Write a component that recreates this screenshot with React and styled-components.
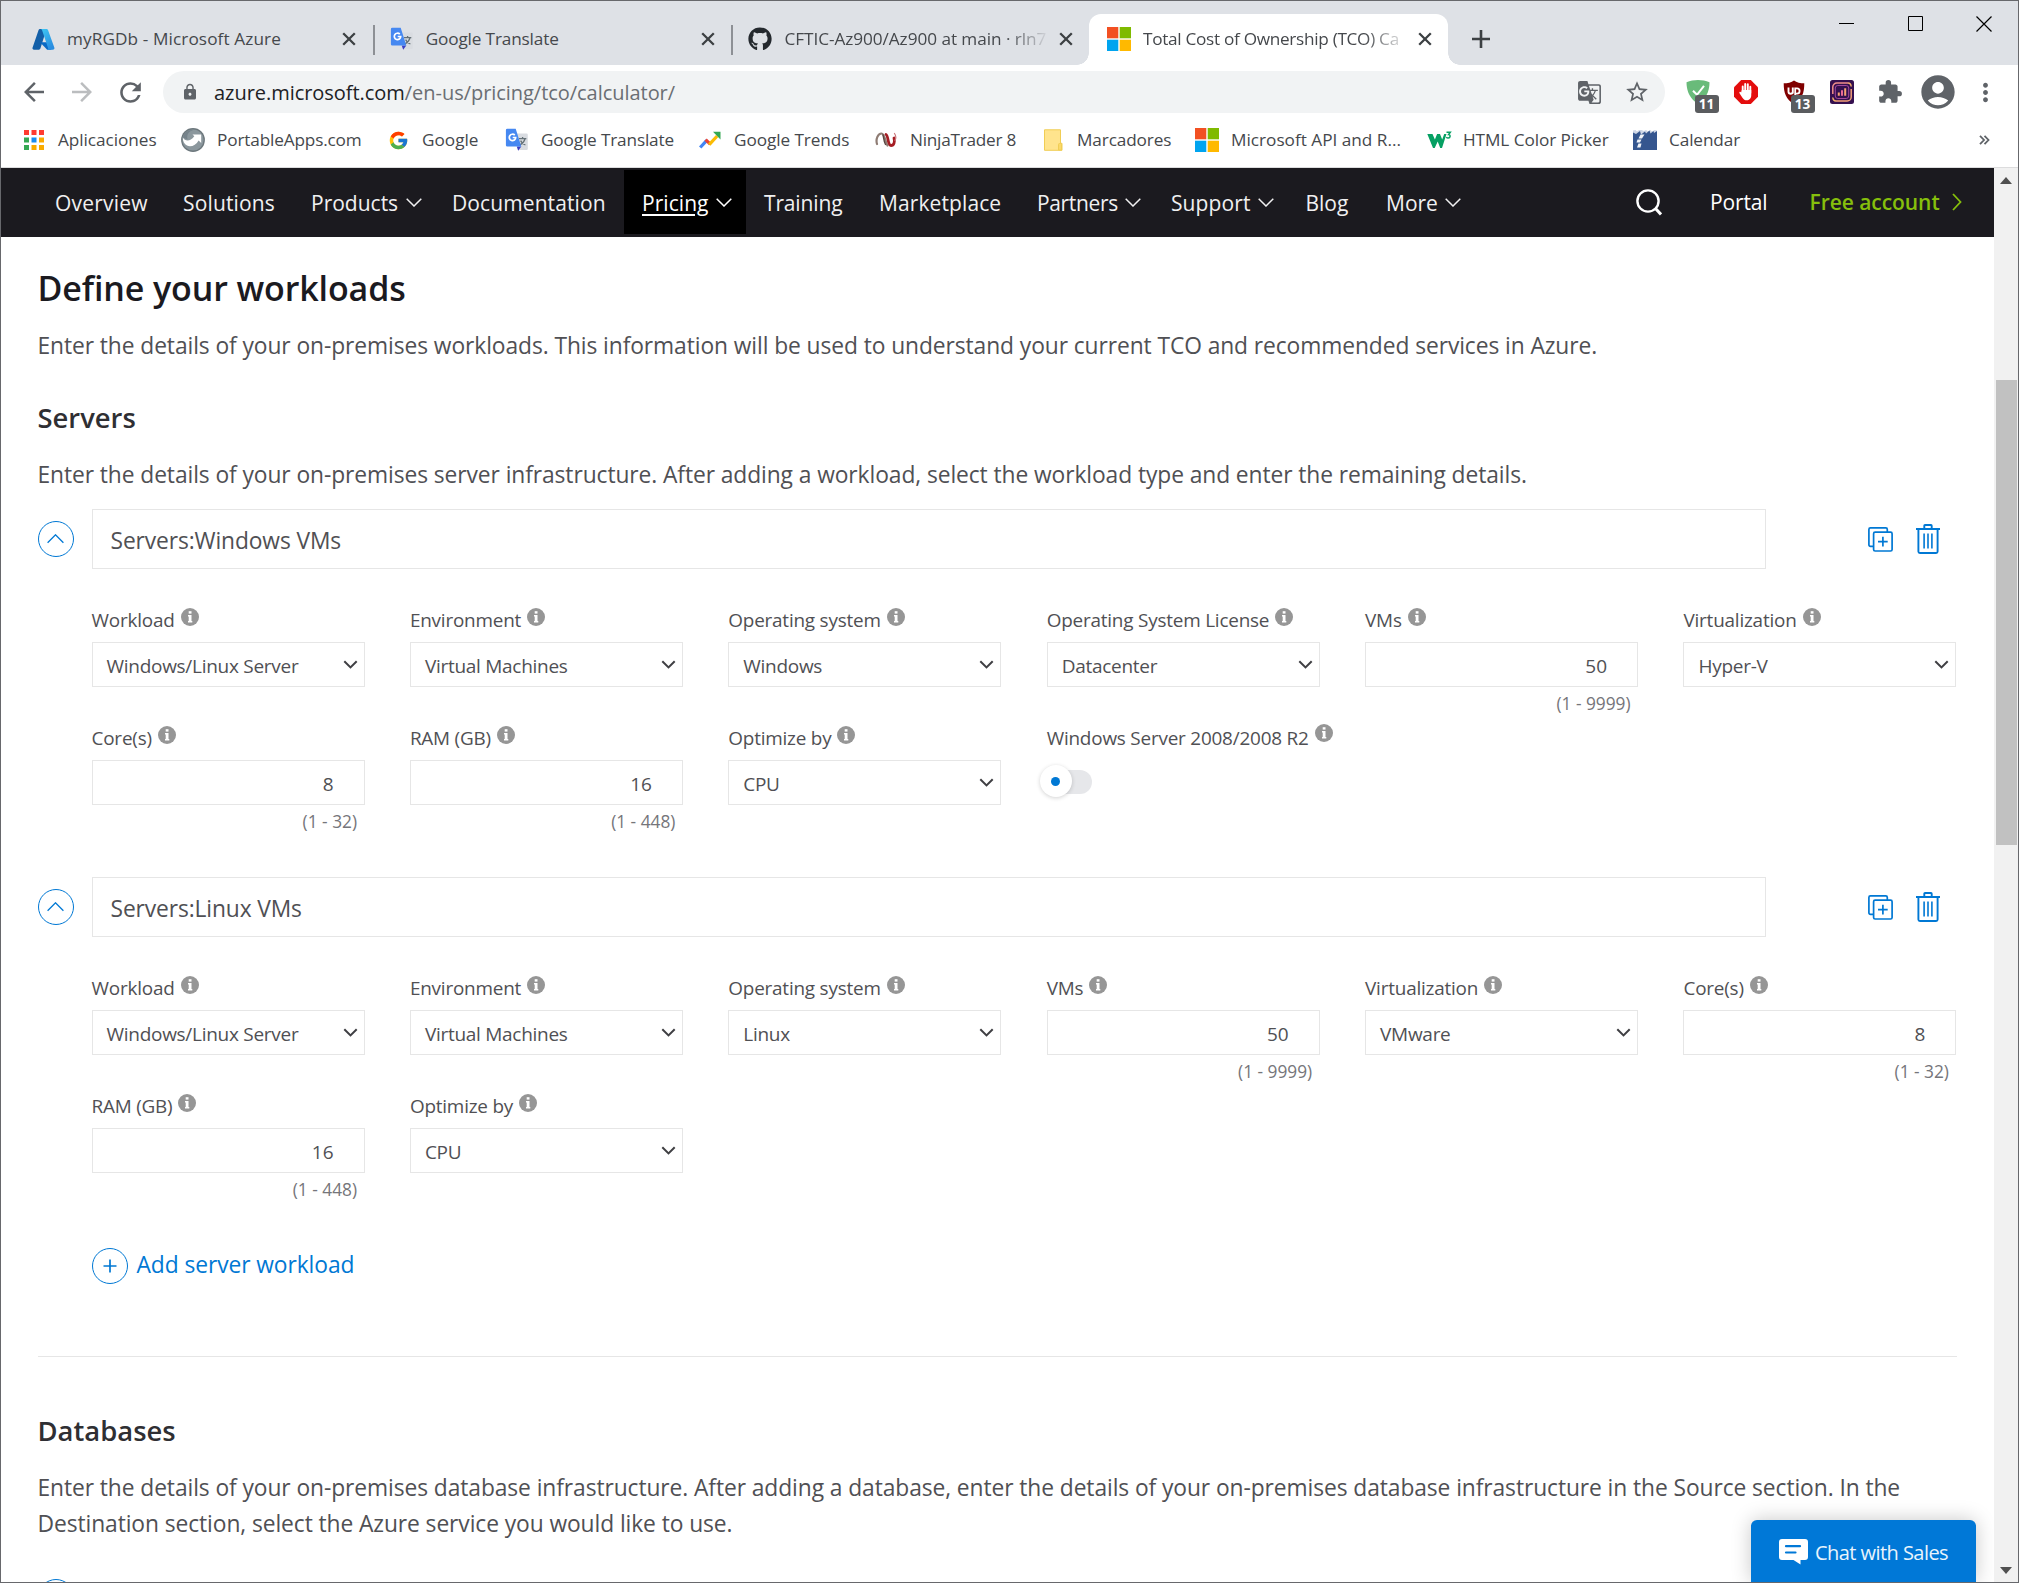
import React from "react";
import styled, { createGlobalStyle, css } from "styled-components";
import {
  MdArrowBack,
  MdArrowForward,
  MdRefresh,
  MdLock,
  MdStarBorder,
  MdExtension,
  MdAccountCircle,
  MdMoreVert,
  MdGTranslate,
} from "react-icons/md";
import { FaGithub } from "react-icons/fa";
import { FcGoogle } from "react-icons/fc";

const blue = "#0078d4";

const GlobalStyle = createGlobalStyle`
  *, *::before, *::after { box-sizing: border-box; }
  body {
    margin: 0;
    font-family: "Open Sans", "Noto Sans", sans-serif;
    background: #fff;
  }
  h1, h2, p { margin: 0; }
  svg { display: block; flex: none; }
`;

/* ---------- window ---------- */

const Window = styled.div`
  display: flex;
  flex-direction: column;
  width: 2019px;
  height: 1583px;
  overflow: hidden;
  border: 1px solid #67686c;
  background: #fff;
`;

const TabStrip = styled.div`
  display: flex;
  flex: none;
  height: 64px;
  padding-left: 12px;
  background: #dee1e6;
`;

const Tab = styled.div`
  position: relative;
  display: flex;
  align-items: center;
  width: 358.7px;
  height: 51px;
  margin-top: 13px;
  padding: 0 0 1px 18px;
  color: #45484c;
  ${(p) =>
    p.$divided &&
    css`
      &::before {
        content: "";
        position: absolute;
        left: 1px;
        top: 11px;
        width: 2px;
        height: 30px;
        background: #8d9095;
      }
    `}
  ${(p) =>
    p.$active &&
    css`
      background: #fff;
      border-radius: 12px 12px 0 0;
      &::before,
      &::after {
        content: "";
        position: absolute;
        bottom: 0;
        width: 12px;
        height: 12px;
      }
      &::before {
        left: -12px;
        background: radial-gradient(circle at 0 0, transparent 11.5px, #fff 12px);
      }
      &::after {
        right: -12px;
        background: radial-gradient(circle at 100% 0, transparent 11.5px, #fff 12px);
      }
    `}
`;

const IconSlot = styled.span`
  display: flex;
  flex: none;
  align-items: center;
  justify-content: center;
  width: 24px;
  height: 24px;
  margin-right: 12px;
`;

const TabTitle = styled.span`
  width: 263px;
  padding-bottom: 1px;
  overflow: hidden;
  white-space: nowrap;
  font-size: 17.2px;
  line-height: 26px;
  letter-spacing: ${(p) => p.$track || 0}px;
  ${(p) =>
    p.$fade &&
    css`
      mask-image: linear-gradient(to right, #000 222px, transparent 266px);
    `}
`;

const TabClose = styled.span`
  margin-left: 11px;
`;

const NewTab = styled.span`
  display: flex;
  align-items: center;
  height: 50px;
  margin: 13px 0 0 24.5px;
`;

const WindowControls = styled.div`
  display: flex;
  margin-left: auto;
`;

const WindowControl = styled.span`
  display: flex;
  align-items: center;
  justify-content: center;
  width: 68.5px;
  height: 45px;
`;

const Toolbar = styled.div`
  display: flex;
  flex: none;
  align-items: center;
  height: 54px;
  padding-left: 9px;
  color: #5f6368;
`;

const ToolButton = styled.span`
  position: relative;
  display: flex;
  flex: none;
  align-items: center;
  justify-content: center;
  width: 48px;
  height: 42px;
  color: ${(p) => (p.$disabled ? "#bbbdbf" : "#5f6368")};
`;

const Omnibox = styled.div`
  display: flex;
  align-items: center;
  width: 1502px;
  height: 42px;
  margin: 0 8.5px 0 9px;
  padding: 0 4px 0 18px;
  border-radius: 21px;
  background: #f1f3f4;
`;

const Url = styled.span`
  flex: 1;
  margin-left: 15px;
  padding-top: 2px;
  font-size: 20px;
  line-height: 30px;
  letter-spacing: -0.04px;
  color: #6a6e73;
  white-space: nowrap;
`;

const Host = styled.span`
  color: #202124;
`;

const Badge = styled.span`
  position: absolute;
  left: 21px;
  top: 24px;
  width: 24px;
  height: 18px;
  border-radius: 3px;
  background: #5a5c5f;
  color: #fff;
  font-size: 13.5px;
  font-weight: 700;
  line-height: 19px;
  text-align: center;
`;

const BookmarkBar = styled.div`
  display: flex;
  flex: none;
  height: 49px;
  padding: 0 0 6px 21px;
  border-bottom: 1px solid #dcdcdd;
`;

const Bookmark = styled.span`
  display: flex;
  flex: none;
  align-items: center;
  width: ${(p) => p.$width}px;
  color: #45484c;
  font-size: 17.2px;
  letter-spacing: ${(p) => p.$track || 0}px;
  white-space: nowrap;
`;

const BookmarkText = styled.span`
  padding-bottom: 2px;
`;

const BookmarkOverflow = styled.span`
  display: flex;
  align-items: center;
  margin: 0 28px 0 auto;
`;

/* ---------- page ---------- */

const Viewport = styled.div`
  display: flex;
  flex: 1;
  min-height: 0;
`;

const Page = styled.div`
  position: relative;
  flex: 1;
  overflow: hidden;
`;

const SiteNav = styled.nav`
  display: flex;
  height: 69px;
  padding: 2px 0 3px 36px;
  background: #1b1a1f;
`;

const NavItem = styled.a`
  display: flex;
  align-items: center;
  width: ${(p) => p.$width}px;
  padding: 1px 0 0 18px;
  color: #f0f0f1;
  font-size: 21px;
  font-weight: 500;
  line-height: 30px;
  letter-spacing: ${(p) => p.$track || 0}px;
  white-space: nowrap;
  ${(p) =>
    p.$current &&
    css`
      background: #000;
      color: #fff;
      & > span {
        text-decoration: underline;
        text-decoration-thickness: 2px;
        text-underline-offset: 3px;
      }
    `}
  svg {
    margin: 0 0 0 7.5px;
  }
`;

const NavTools = styled.div`
  display: flex;
  align-items: center;
  margin-left: auto;
  padding-right: 32px;
  color: #fff;
  font-size: 21px;
  font-weight: 500;
`;

const PortalLink = styled.a`
  width: 99.5px;
  margin-left: 48px;
  letter-spacing: -0.15px;
`;

const FreeLink = styled.a`
  display: flex;
  align-items: center;
  justify-content: space-between;
  width: 152.5px;
  color: #86bf0c;
  font-weight: 600;
  letter-spacing: -0.05px;
  white-space: nowrap;
`;

const Main = styled.main`
  padding: 27px 37px 0 36.5px;
`;

const PageTitle = styled.h1`
  font-size: 34px;
  font-weight: 600;
  line-height: 48px;
  letter-spacing: -0.12px;
  color: #1b1a1f;
`;

const SectionTitle = styled.h2`
  margin-top: ${(p) => p.$gap}px;
  font-size: 27.4px;
  font-weight: 600;
  line-height: 36px;
  color: #2f2f33;
`;

const Lead = styled.p`
  margin-top: ${(p) => p.$gap}px;
  font-size: 22.8px;
  line-height: 36px;
  letter-spacing: -0.085px;
  color: #505054;
  white-space: nowrap;
`;

const Workload = styled.section`
  margin: ${(p) => p.$top || 0}px 0 36px;
`;

const WorkloadHeader = styled.div`
  display: flex;
  align-items: center;
  height: 60px;
`;

const RoundButton = styled.span`
  display: flex;
  flex: none;
  align-items: center;
  justify-content: center;
  width: 36px;
  height: 36px;
  border: 1.5px solid ${blue};
  border-radius: 50%;
`;

const NameField = styled.div`
  display: flex;
  align-items: center;
  width: 1674px;
  height: 60px;
  margin-left: 18px;
  padding: 2px 18px 0;
  border: 1px solid #e6e6e6;
  color: #505054;
  font-size: 22.8px;
  letter-spacing: -0.12px;
`;

const HeaderActions = styled.div`
  display: flex;
  align-items: center;
  gap: 23px;
  margin: 0 17px 0 auto;
`;

const FieldGrid = styled.div`
  display: grid;
  grid-template-columns: repeat(6, 273px);
  grid-auto-rows: 118px;
  column-gap: 45.4px;
  margin: 36px 0 0 54px;
`;

const Field = styled.div`
  min-width: 0;
`;

const Label = styled.div`
  display: flex;
  height: 28px;
  margin-bottom: 9px;
  font-size: 18.9px;
  line-height: 30px;
  letter-spacing: -0.2px;
  color: #505054;
  white-space: nowrap;
  svg {
    margin: ${(p) => (p.$raised ? 1 : 3)}px 0 0 6px;
  }
`;

const Control = styled.div`
  display: flex;
  align-items: center;
  justify-content: ${(p) => (p.$numeric ? "flex-end" : "space-between")};
  height: 45px;
  padding: ${(p) => (p.$numeric ? "3px 30px 0 0" : "3px 6px 0 14px")};
  border: 1px solid #e6e6e6;
  color: #505054;
  font-size: 19px;
  line-height: 28px;
  letter-spacing: ${(p) => (p.$numeric ? 0 : -0.28)}px;
  svg {
    margin-top: -4px;
  }
`;

const Hint = styled.div`
  margin: 5px 7.5px 0 0;
  color: #75757a;
  font-size: 17.3px;
  line-height: 24px;
  text-align: right;
`;

const Switch = styled.div`
  display: flex;
  align-items: center;
  width: 47px;
  height: 24px;
  margin: 19px 0 0 -2px;
  border-radius: 12px;
  background: #e6e7ea;
`;

const Knob = styled.span`
  display: flex;
  flex: none;
  align-items: center;
  justify-content: center;
  width: 32px;
  height: 32px;
  margin: -2px 0 0 -5px;
  border-radius: 50%;
  background: #fff;
  box-shadow: 0 1px 4px rgba(0, 0, 0, 0.18);
  &::after {
    content: "";
    width: 9px;
    height: 9px;
    border-radius: 50%;
    background: ${blue};
  }
`;

const AddWorkload = styled.a`
  display: flex;
  align-items: center;
  gap: 9px;
  height: 36px;
  margin: 39px 0 72px 54px;
  color: ${blue};
  font-size: 22.8px;
  line-height: 34px;
  letter-spacing: -0.08px;
`;

const AddText = styled.span`
  padding-bottom: 2px;
`;

const Divider = styled.div`
  height: 1px;
  background: #e6e6e6;
`;

const NextWorkload = styled.div`
  margin-top: 37px;
`;

const ChatButton = styled.div`
  position: absolute;
  right: 18px;
  bottom: 0;
  display: flex;
  align-items: flex-start;
  width: 225px;
  height: 62px;
  padding: 19px 0 0 28px;
  border-radius: 6px 6px 0 0;
  background: #0078d7;
  box-shadow: 0 0 20px rgba(0, 0, 0, 0.22);
  color: #e9f4fc;
  font-size: 20px;
  line-height: 28px;
  letter-spacing: -0.55px;
  white-space: nowrap;
  svg {
    margin-right: 7px;
  }
`;

const ScrollTrack = styled.div`
  display: flex;
  flex-direction: column;
  align-items: center;
  width: 24px;
  padding: 9px 0 8px;
  background: #f1f1f1;
`;

const ScrollThumb = styled.div`
  width: 21px;
  height: 465px;
  margin: 196px 0 auto;
  background: #c1c1c1;
`;

/* ---------- icons ---------- */

const Cross = () => (
  <svg width="16" height="16" viewBox="0 0 16 16" stroke="#3c4043" strokeWidth="2.3">
    <path d="M2.2 2.2 13.8 13.8M13.8 2.2 2.2 13.8" />
  </svg>
);

const AzureLogo = () => (
  <svg width="23" height="23" viewBox="0 0 23 23">
    <defs>
      <linearGradient id="az" x1="0" y1="0" x2="0.6" y2="1">
        <stop offset="0" stopColor="#3fc8f4" />
        <stop offset="1" stopColor="#2a8de0" />
      </linearGradient>
    </defs>
    <path d="M8 1h6.5L8.4 20.6a1.6 1.6 0 0 1-1.5 1.1H2A1.5 1.5 0 0 1 .6 19.6L6.6 2A1.5 1.5 0 0 1 8 1z" fill="#135fa8" />
    <path d="M8 14.2h9.5l2 7.5h-4.3z" fill="#0a69c4" />
    <path d="M8.6 1h6a1.5 1.5 0 0 1 1.4 1l6.3 17.6a1.5 1.5 0 0 1-1.4 2.1h-6.3a1.5 1.5 0 0 0 1.3-2.1L10 2a1.5 1.5 0 0 0-1.4-1z" fill="url(#az)" />
  </svg>
);

const TranslateLogo = () => (
  <svg width="24" height="24" viewBox="0 0 24 24">
    <path d="M9 5.5h12.5a1.3 1.3 0 0 1 1.3 1.3v14a1.3 1.3 0 0 1-1.3 1.3H13.6z" fill="#d9dce1" />
    <path d="M14 10.6h7.3M17.6 9v1.6M20 10.8c-.7 2.6-2.8 4.9-5 6.1M15.6 12.6c1 2 2.8 3.7 4.8 4.4" stroke="#657177" strokeWidth="1.3" fill="none" />
    <path d="M11.7 18.4h4.6l-3.1 4.4z" fill="#3a3fc4" />
    <path d="M2.3.8h8.4l5.6 17.8H2.3A1.4 1.4 0 0 1 .9 17.2V2.2A1.4 1.4 0 0 1 2.3.8z" fill="#4688f1" />
    <path d="M9.800 7.200a3.200 3.200 0 1 0 .9 2.300H7.700" stroke="#fff" strokeWidth="1.700" fill="none" />
  </svg>
);

const MicrosoftLogo = () => (
  <svg width="24" height="24" viewBox="0 0 24 24">
    <path d="M0 0h11.3v11.3H0z" fill="#f25022" />
    <path d="M12.7 0H24v11.3H12.7z" fill="#7fba00" />
    <path d="M0 12.7h11.3V24H0z" fill="#00a4ef" />
    <path d="M12.7 12.7H24V24H12.7z" fill="#ffb900" />
  </svg>
);

const AppsIcon = () => {
  const colors = ["#ff3b30", "#ff3b30", "#ff3b30", "#34a853", "#1a8cf0", "#f9ab00", "#34a853", "#f9ab00", "#f9ab00"];
  return (
    <svg width="20" height="20" viewBox="0 0 20 20">
      {colors.map((c, i) => (
        <rect key={i} x={(i % 3) * 7.5} y={Math.floor(i / 3) * 7.5} width="5" height="5" fill={c} />
      ))}
    </svg>
  );
};

const PortableAppsIcon = () => (
  <svg width="24" height="24" viewBox="0 0 24 24">
    <circle cx="12" cy="12" r="11.9" fill="#6c777c" />
    <circle cx="12" cy="12" r="10.6" fill="#8b979d" />
    <path d="M11.500 6.500h8.700v8.500l-2.600-2.600c-2.600 4.600-7.400 7-11.600 5.200C3.400 16.300 1.700 13.500 1.800 9.500c2.200 3.600 7 4.600 11.500-1.200z" fill="#fff" />
    <path d="M2 9.500C3 4.500 8 1.500 12 2.200 7.500 3.500 5.500 6.500 6.500 11.500z" fill="#75828a" />
  </svg>
);

const TrendsIcon = () => (
  <svg width="22" height="18" viewBox="0 0 22 18" fill="none" strokeWidth="3.2">
    <path d="M1.200 16.500 7.800 9.300" stroke="#4285f4" />
    <path d="M6.600 8.600 11.200 13.200" stroke="#ea4335" />
    <path d="M10.200 13.600 18.200 5" stroke="#fbbc04" />
    <path d="M14 .8h7.500v7.800z" fill="#34a853" />
  </svg>
);

const NinjaIcon = () => (
  <svg width="22" height="16" viewBox="0 0 22 16" fill="none" strokeLinecap="round">
    <path d="M2 12C.500 7 3 1.500 6.500 1.500c3.500 0 3.500 9 6 12" stroke="#8e7c74" strokeWidth="2.200" />
    <path d="M8 3c1 3 .500 6 2.500 9.500" stroke="#5a4540" strokeWidth="1.400" />
    <path d="M11 2.500c2.500 1 1.500 11 5 11 3 0 4-3.500 3-7.500" stroke="#a51d24" strokeWidth="2.800" />
    <path d="M19.500 1.500c1.500 2 1.500 5 .500 7" stroke="#c9757a" strokeWidth="1.200" />
  </svg>
);

const FolderIcon = () => (
  <svg width="19" height="22" viewBox="0 0 19 22" fill="#ffe48d" stroke="#f0cd55">
    <path d="M.5.8h16v13.500h1.5v7H.5z" />
    <path d="M14.500 21v-5.500a1 1 0 0 1 1-1h1a1 1 0 0 1 1 1V21z" fill="#fbd968" />
  </svg>
);

const W3Icon = () => (
  <svg width="25" height="18" viewBox="0 0 25 18">
    <path d="M.3 3h5.200L7.900 8.500 10.100 3h2.900L15.200 8.500 17.200 3h2.300L15 17h-1.800L10.700 10.500l-3 6.500H6z" fill="#06a063" />
    <path d="M19.500 1.200h3.800L21.600 3.500c2.100.1 2 3.600-.4 3.600-.9 0-1.500-.3-1.900-.9" fill="none" stroke="#06a063" strokeWidth="1.500" />
  </svg>
);

const CalendarIcon = () => (
  <svg width="24" height="20" viewBox="0 0 24 20">
    <path d="M0 .5 2.500 0 4 1.500 6 0h2.500L11 1l2-1 2 1.500L17.500 0 19 1.500 21.500 0 24 .5V20H0z" fill="#cfd7e6" />
    <path d="M0 2.500 3 4l4-3 1 3.500 4-3 1 2 3.500-3 1 3L20.500 1l.500 2 3-2V20H0z" fill="#35568f" />
    <path d="M7.500 4.500h4L9 8.500H5.500zM4.500 9.500h4l-1.500 3H3.500zM5.500 13.500h3l-1 4H4z" fill="#f0f3f8" />
  </svg>
);

const GreenShield = () => (
  <svg width="24" height="24" viewBox="0 0 24 24">
    <path d="M12 0c3.800 0 8 .8 11.500 2.200C23.500 12 19.500 19 12 24 4.500 19 .5 12 .5 2.200 4 .8 8.200 0 12 0z" fill="#69bb7a" />
    <path d="m7 10.800 4 4 7-9" fill="none" stroke="#fff" strokeWidth="2" />
  </svg>
);

const StopHand = () => (
  <svg width="24" height="24" viewBox="0 0 24 24">
    <path d="M7.200 0h9.600L24 7.200v9.600L16.800 24H7.200L0 16.800V7.200z" fill="#e40d0d" />
    <path d="M8.700 13V6.400M11.200 11V4M13.800 11V4.300M16.300 13V6.800" stroke="#fff" strokeWidth="1.900" strokeLinecap="round" />
    <path d="M7.800 10h9.450v5.300c0 5.900-6.700 6.300-8.800 2.400L5.500 13.300c-.7-1.300.9-2 1.700-.9z" fill="#fff" />
  </svg>
);

const Ublock = () => (
  <svg width="24" height="24" viewBox="0 0 24 24">
    <path d="M12 .5c2.500 2 6.500 2.800 10.300 2.800C22.300 13 20 19.500 12 24 4 19.500 1.700 13 1.700 3.300 5.500 3.300 9.500 2.500 12 .5z" fill="#800000" />
    <path d="M6.500 7.500v4.300c0 2.600 4.300 2.600 4.300 0V7.500v6" fill="none" stroke="#fff" strokeWidth="1.900" />
    <path d="M13.200 15V8.400h1.800a2.600 2.600 0 0 1 0 5.200h-1.800" fill="none" stroke="#fff" strokeWidth="1.800" />
  </svg>
);

const PurpleChart = () => (
  <svg width="24" height="24" viewBox="0 0 24 24" fill="none" strokeWidth="1.5">
    <rect width="24" height="24" rx="2.500" fill="#35104f" />
    <path d="M2.800 14V7a4 4 0 0 1 4-4H18" stroke="#f08f8a" />
    <path d="M21.200 9v8a4 4 0 0 1-4 4H6" stroke="#f3a078" />
    <path d="M18 3a3 3 0 0 1 3 3.500M6 21a3 3 0 0 1-3-3.500" stroke="#f4b06c" />
    <rect x="5.300" y="5.500" width="13.400" height="13" rx="2.500" stroke="#a0479a" strokeWidth="1" />
    <path d="M8.800 15.800v-3.300M15.200 15.800V8.200" stroke="#f7a372" strokeWidth="2" />
    <path d="M12 15.800v-5.500" stroke="#ea6a96" strokeWidth="2" />
  </svg>
);

const NavChevron = () => (
  <svg width="16" height="9" viewBox="0 0 16 9" fill="none" stroke="currentColor" strokeWidth="1.5">
    <path d="m.7.7 7.300 7.300L15.300.7" />
  </svg>
);

const InfoIcon = () => (
  <svg width="18" height="18" viewBox="0 0 18 18">
    <circle cx="9" cy="9" r="9" fill="#969696" />
    <rect x="7.700" y="3.200" width="2.800" height="2.400" fill="#fff" />
    <path d="M7 7h3.500v6h.8v1.400H7V13h.7V8.400H7z" fill="#fff" />
  </svg>
);

const SelectArrow = () => (
  <svg width="15" height="9" viewBox="0 0 15 9" fill="none" stroke="#3f3f43" strokeWidth="2">
    <path d="m1.300 1.200 6.200 6.200 6.200-6.200" />
  </svg>
);

const CollapseIcon = () => (
  <svg width="17" height="10" viewBox="0 0 17 10" fill="none" stroke={blue} strokeWidth="1.300">
    <path d="m.6 8.700 7.900-7.900 7.900 7.900" />
  </svg>
);

const CopyIcon = () => (
  <svg width="25" height="25" viewBox="0 0 25 25" fill="none" stroke={blue} strokeWidth="1.700">
    <path d="M5.500 19.300H2.400A1.500 1.500 0 0 1 .9 17.800V2.400A1.500 1.500 0 0 1 2.400.9h15.400a1.500 1.500 0 0 1 1.500 1.500v2.500" />
    <rect x="5.600" y="5.200" width="18.500" height="18.800" rx="1.500" />
    <path d="M14.900 9.800v9.600M10 14.600h9.700" />
  </svg>
);

const TrashIcon = () => (
  <svg width="24" height="30" viewBox="0 0 24 30" fill="none" stroke={blue} strokeWidth="1.900">
    <path d="M0 5h24M8.300 4.500V1.700a.7.7 0 0 1 .7-.7h6a.7.7 0 0 1 .7.7v2.800M2.400 5.500v22a1.500 1.500 0 0 0 1.500 1.500h16.200a1.500 1.500 0 0 0 1.500-1.500v-22" />
    <path d="M8.100 9.500v15M12 9.500v15M15.900 9.500v15" strokeWidth="1.600" />
  </svg>
);

const PlusIcon = () => (
  <svg width="14" height="14" viewBox="0 0 14 14" stroke={blue} strokeWidth="1.700">
    <path d="M7 .5v13M.5 7h13" />
  </svg>
);

const ChatIcon = () => (
  <svg width="29" height="26" viewBox="0 0 29 26">
    <path d="M3 0h23a3 3 0 0 1 3 3v15a3 3 0 0 1-3 3h-4.500v4.500L14.500 21H3a3 3 0 0 1-3-3V3a3 3 0 0 1 3-3z" fill="#fff" />
    <path d="M7 7.200h14M7 13.500h9.500" stroke="#0078d7" strokeWidth="2.200" strokeLinecap="round" />
  </svg>
);

/* ---------- data ---------- */

const tabs = [
  { title: "myRGDb - Microsoft Azure", icon: <AzureLogo />, track: 0.1 },
  { title: "Google Translate", icon: <TranslateLogo />, divided: true, track: -0.15 },
  { title: "CFTIC-Az900/Az900 at main · rln7", icon: <FaGithub size={24} color="#24292e" />, divided: true, fade: true, track: -0.05 },
  { title: "Total Cost of Ownership (TCO) Ca", icon: <MicrosoftLogo />, active: true, fade: true, track: -0.3 },
];

const bookmarks = [
  { text: "Aplicaciones", icon: <AppsIcon />, width: 159, track: -0.05 },
  { text: "PortableApps.com", icon: <PortableAppsIcon />, width: 205, track: -0.15 },
  { text: "Google", icon: <FcGoogle size={21} />, width: 119 },
  { text: "Google Translate", icon: <TranslateLogo />, width: 193, track: -0.15 },
  { text: "Google Trends", icon: <TrendsIcon />, width: 176, track: -0.08 },
  { text: "NinjaTrader 8", icon: <NinjaIcon />, width: 167, track: -0.25 },
  { text: "Marcadores", icon: <FolderIcon />, width: 154, track: -0.12 },
  { text: "Microsoft API and R...", icon: <MicrosoftLogo />, width: 232 },
  { text: "HTML Color Picker", icon: <W3Icon />, width: 206, track: -0.08 },
  { text: "Calendar", icon: <CalendarIcon />, width: 120, track: -0.12 },
];

const navItems = [
  { text: "Overview", width: 128, track: 0.2 },
  { text: "Solutions", width: 128, track: 0.15 },
  { text: "Products", width: 141, menu: true, track: 0 },
  { text: "Documentation", width: 190, track: 0.1 },
  { text: "Pricing", width: 122, menu: true, current: true, track: 0.05 },
  { text: "Training", width: 115, track: -0.15 },
  { text: "Marketplace", width: 158, track: 0.1 },
  { text: "Partners", width: 134, menu: true, track: -0.35 },
  { text: "Support", width: 134.5, menu: true, track: 0.1 },
  { text: "Blog", width: 80.5 },
  { text: "More", width: 110, menu: true },
];

const windowsFields = [
  { label: "Workload", value: "Windows/Linux Server" },
  { label: "Environment", value: "Virtual Machines" },
  { label: "Operating system", value: "Windows" },
  { label: "Operating System License", value: "Datacenter" },
  { label: "VMs", value: "50", range: "(1 - 9999)" },
  { label: "Virtualization", value: "Hyper-V" },
  { label: "Core(s)", value: "8", range: "(1 - 32)" },
  { label: "RAM (GB)", value: "16", range: "(1 - 448)" },
  { label: "Optimize by", value: "CPU" },
  { label: "Windows Server 2008/2008 R2", toggle: true },
];

const linuxFields = [
  { label: "Workload", value: "Windows/Linux Server" },
  { label: "Environment", value: "Virtual Machines" },
  { label: "Operating system", value: "Linux" },
  { label: "VMs", value: "50", range: "(1 - 9999)" },
  { label: "Virtualization", value: "VMware" },
  { label: "Core(s)", value: "8", range: "(1 - 32)" },
  { label: "RAM (GB)", value: "16", range: "(1 - 448)" },
  { label: "Optimize by", value: "CPU" },
];

/* ---------- composed parts ---------- */

function FormField({ label, value, range, toggle }) {
  return (
    <Field>
      <Label $raised={toggle}>
        <span>{label}</span>
        <InfoIcon />
      </Label>
      {toggle ? (
        <Switch>
          <Knob />
        </Switch>
      ) : (
        <Control $numeric={!!range}>
          <span>{value}</span>
          {!range && <SelectArrow />}
        </Control>
      )}
      {range && <Hint>{range}</Hint>}
    </Field>
  );
}

function WorkloadCard({ name, fields, top }) {
  return (
    <Workload $top={top}>
      <WorkloadHeader>
        <RoundButton>
          <CollapseIcon />
        </RoundButton>
        <NameField>{name}</NameField>
        <HeaderActions>
          <CopyIcon />
          <TrashIcon />
        </HeaderActions>
      </WorkloadHeader>
      <FieldGrid>
        {fields.map((f) => (
          <FormField key={f.label} {...f} />
        ))}
      </FieldGrid>
    </Workload>
  );
}

function BrowserChrome() {
  return (
    <>
      <TabStrip>
        {tabs.map((t) => (
          <Tab key={t.title} $active={t.active} $divided={t.divided}>
            <IconSlot>{t.icon}</IconSlot>
            <TabTitle $fade={t.fade} $track={t.track}>{t.title}</TabTitle>
            <TabClose>
              <Cross />
            </TabClose>
          </Tab>
        ))}
        <NewTab>
          <svg width="18" height="18" viewBox="0 0 18 18" stroke="#3c4043" strokeWidth="2.600">
            <path d="M9 0v18M0 9h18" />
          </svg>
        </NewTab>
        <WindowControls>
          <WindowControl>
            <svg width="15" height="15" viewBox="0 0 15 15" stroke="#000">
              <path d="M0 7.500h15" />
            </svg>
          </WindowControl>
          <WindowControl>
            <svg width="15" height="15" viewBox="0 0 15 15" stroke="#000" fill="none">
              <path d="M.5.5h14v14H.5z" />
            </svg>
          </WindowControl>
          <WindowControl>
            <svg width="16" height="16" viewBox="0 0 16 16" stroke="#000" strokeWidth="1.200">
              <path d="m.5.5 15 15M15.500.5l-15 15" />
            </svg>
          </WindowControl>
        </WindowControls>
      </TabStrip>
      <Toolbar>
        <ToolButton><MdArrowBack size={30} /></ToolButton>
        <ToolButton $disabled><MdArrowForward size={30} /></ToolButton>
        <ToolButton><MdRefresh size={31} /></ToolButton>
        <Omnibox>
          <MdLock size={18} />
          <Url>
            <Host>azure.microsoft.com</Host>/en-us/pricing/tco/calculator/
          </Url>
          <ToolButton><MdGTranslate size={25} /></ToolButton>
          <ToolButton><MdStarBorder size={26} /></ToolButton>
        </Omnibox>
        <ToolButton><GreenShield /><Badge>11</Badge></ToolButton>
        <ToolButton><StopHand /></ToolButton>
        <ToolButton><Ublock /><Badge>13</Badge></ToolButton>
        <ToolButton><PurpleChart /></ToolButton>
        <ToolButton><MdExtension size={26} /></ToolButton>
        <ToolButton><MdAccountCircle size={40} /></ToolButton>
        <ToolButton><MdMoreVert size={29} /></ToolButton>
      </Toolbar>
      <BookmarkBar>
        {bookmarks.map((b) => (
          <Bookmark key={b.text} $width={b.width} $track={b.track}>
            <IconSlot>{b.icon}</IconSlot>
            <BookmarkText>{b.text}</BookmarkText>
          </Bookmark>
        ))}
        <BookmarkOverflow>
          <svg width="11" height="10" viewBox="0 0 11 10" fill="none" stroke="#5f6368" strokeWidth="1.800">
            <path d="m1 .8 4 4.200-4 4.200M5.500.8l4 4.200-4 4.200" />
          </svg>
        </BookmarkOverflow>
      </BookmarkBar>
    </>
  );
}

export default function App() {
  return (
    <Window>
      <GlobalStyle />
      <BrowserChrome />
      <Viewport>
        <Page>
          <SiteNav>
            {navItems.map((n) => (
              <NavItem key={n.text} $width={n.width} $current={n.current} $track={n.track}>
                <span>{n.text}</span>
                {n.menu && <NavChevron />}
              </NavItem>
            ))}
            <NavTools>
              <svg width="26" height="27" viewBox="0 0 26 27" fill="none" stroke="#fff" strokeWidth="2.400">
                <circle cx="12" cy="12" r="10.600" />
                <path d="m19.500 19.500 5.500 6" strokeWidth="3" />
              </svg>
              <PortalLink>Portal</PortalLink>
              <FreeLink>
                <span>Free account</span>
                <svg width="10" height="18" viewBox="0 0 10 18" fill="none" stroke="currentColor" strokeWidth="1.800">
                  <path d="m1 1 7.500 8L1 17" />
                </svg>
              </FreeLink>
            </NavTools>
          </SiteNav>
          <Main>
            <PageTitle>Define your workloads</PageTitle>
            <Lead $gap={16}>
              Enter the details of your on-premises workloads. This information will be used to understand your current TCO and recommended services in Azure.
            </Lead>
            <SectionTitle $gap={36}>Servers</SectionTitle>
            <Lead $gap={21}>
              Enter the details of your on-premises server infrastructure. After adding a workload, select the workload type and enter the remaining details.
            </Lead>
            <WorkloadCard name="Servers:Windows VMs" fields={windowsFields} top={16} />
            <WorkloadCard name="Servers:Linux VMs" fields={linuxFields} />
            <AddWorkload>
              <RoundButton>
                <PlusIcon />
              </RoundButton>
              <AddText>Add server workload</AddText>
            </AddWorkload>
            <Divider />
            <SectionTitle $gap={56}>Databases</SectionTitle>
            <Lead $gap={21}>
              Enter the details of your on-premises database infrastructure. After adding a database, enter the details of your on-premises database infrastructure in the Source section. In the
              <br />
              Destination section, select the Azure service you would like to use.
            </Lead>
            <NextWorkload>
              <RoundButton />
            </NextWorkload>
          </Main>
          <ChatButton>
            <ChatIcon />
            <span>Chat with Sales</span>
          </ChatButton>
        </Page>
        <ScrollTrack>
          <svg width="12" height="7" viewBox="0 0 12 7"><path d="M6 0l6 7H0z" fill="#505050" /></svg>
          <ScrollThumb />
          <svg width="12" height="7" viewBox="0 0 12 7"><path d="M6 7l6-7H0z" fill="#505050" /></svg>
        </ScrollTrack>
      </Viewport>
    </Window>
  );
}
